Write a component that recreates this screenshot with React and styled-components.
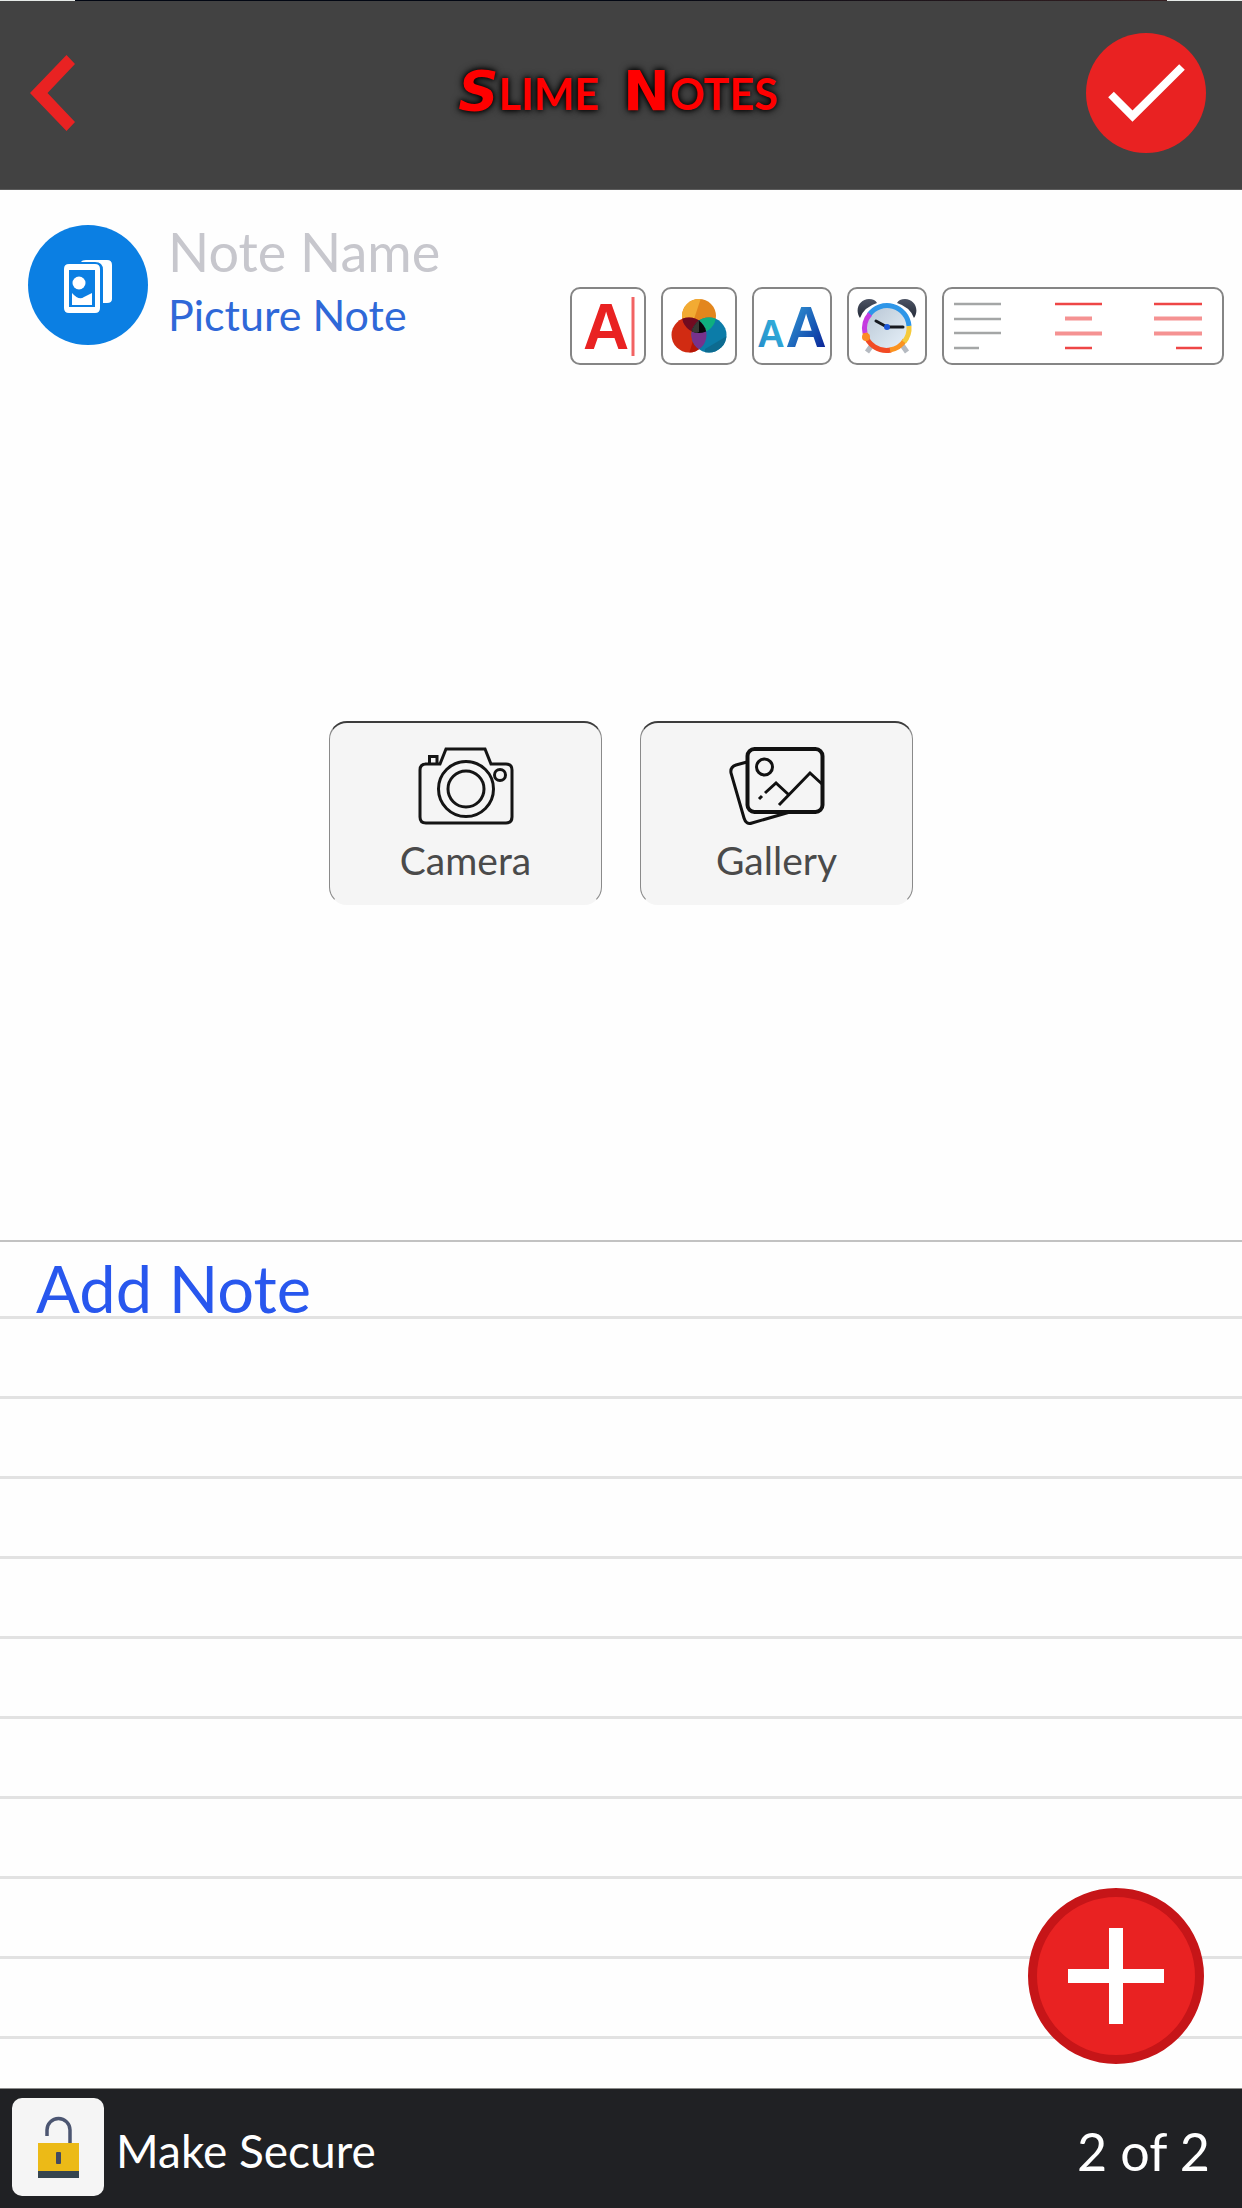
import React, { useState } from "react";
import styled, { createGlobalStyle } from "styled-components";

const GlobalStyle = createGlobalStyle`
  * {
    box-sizing: border-box;
  }
  body {
    margin: 0;
    background: #fefefe;
    font-family: Lato, "Open Sans", sans-serif;
  }
  button {
    padding: 0;
    border: none;
    background: none;
    font-family: inherit;
    cursor: pointer;
  }
  svg {
    display: block;
  }
`;

const Page = styled.div`
  display: flex;
  flex-direction: column;
  min-height: 100vh;
`;

const Header = styled.header`
  display: grid;
  grid-template-columns: 1fr auto 1fr;
  align-items: center;
  height: 190px;
  padding: 0 36px 4px 30px;
  border-bottom: 1px solid #5c5c5c;
  background: linear-gradient(
      90deg,
      #e6ebe8 0 6%,
      #020713 6% 50%,
      #351f21 94%,
      #e6ebe8 94%
    )
    top / 100% 1px no-repeat #424242;
`;

const BackButton = styled.button`
  justify-self: start;
`;

const DoneButton = styled.button`
  justify-self: end;
  width: 120px;
  height: 120px;
  border-radius: 50%;
  background: #e92222;
`;

const Logo = styled.h1`
  display: flex;
  gap: 24px;
  margin: 0;
  color: #ff0000;
  font-size: 43px;
  font-weight: 700;
  line-height: 60px;
  text-shadow: 0 0 8px #000000, 0 0 5px #000000;
`;

const LogoInitial = styled.span`
  font-family: "DejaVu Sans", sans-serif;
  font-size: 56px;
  font-style: ${(props) => (props.$slanted ? "oblique" : "normal")};
`;

const NoteHeader = styled.section`
  display: flex;
  gap: 20px;
  padding: 35px 18px 0 28px;
`;

const NoteBadge = styled.div`
  flex: none;
  width: 120px;
  height: 120px;
  border-radius: 50%;
  background: #0b7fe3;
`;

const NoteTitle = styled.div`
  display: flex;
  flex: 1;
  flex-direction: column;
  gap: 12px;
  min-width: 0;
`;

const NameInput = styled.input`
  width: 100%;
  height: 52px;
  padding: 0;
  border: none;
  outline: none;
  background: transparent;
  color: #333333;
  font-family: inherit;
  font-size: 54px;
  line-height: 52px;

  &::placeholder {
    color: #c7c7cd;
    opacity: 1;
  }
`;

const NoteType = styled.span`
  color: #2f68d8;
  font-size: 43px;
  line-height: 52px;
`;

const Toolbar = styled.div`
  display: flex;
  flex: none;
  gap: 15px;
  margin-top: 62px;
`;

const ToolButton = styled.button`
  display: flex;
  align-items: center;
  justify-content: center;
  width: ${(props) => (props.$wide ? 80 : 76)}px;
  height: 78px;
  border: 2px solid #858585;
  border-radius: 10px;
  background: #ffffff;
`;

const AlignGroup = styled.div`
  display: flex;
  align-items: center;
  justify-content: space-between;
  width: 282px;
  height: 78px;
  padding: 0 20px 0 10px;
  border: 2px solid #858585;
  border-radius: 10px;
  background: #ffffff;
`;

const Media = styled.section`
  display: flex;
  flex: 1;
  align-items: center;
  justify-content: center;
  gap: 38px;
  padding: 40px 20px 20px;
`;

const MediaButton = styled.button`
  display: flex;
  flex-direction: column;
  align-items: center;
  justify-content: center;
  gap: 12px;
  width: 273px;
  height: 184px;
  padding-top: 4px;
  border: 1px solid #8a8a8a;
  border-top: 2px solid #3c3c3c;
  border-bottom-color: #f5f5f5;
  border-radius: 18px;
  background: #f5f5f5;
  color: #4a4a4a;
  font-size: 39px;
  line-height: 46px;
`;

const Notes = styled.section`
  position: relative;
  border-top: 2px solid #c2c2c2;
`;

const NoteText = styled.textarea`
  display: block;
  width: 100%;
  padding: 6px 36px 40px;
  border: none;
  outline: none;
  resize: none;
  background: repeating-linear-gradient(
    transparent 0 74px,
    #e2e2e2 74px 77px,
    transparent 77px 80px
  );
  color: #2857ee;
  font-family: inherit;
  font-size: 65px;
  line-height: 80px;

  &::placeholder {
    color: #2857ee;
    opacity: 1;
  }
`;

const AddButton = styled.button`
  position: absolute;
  right: 38px;
  bottom: 24px;
  display: flex;
  align-items: center;
  justify-content: center;
  width: 176px;
  height: 176px;
  border: 9px solid #c61518;
  border-radius: 50%;
  background: #e92222;
`;

const Footer = styled.footer`
  display: flex;
  align-items: center;
  justify-content: space-between;
  height: 120px;
  padding: 0 32px 4px 12px;
  border-top: 1px solid #8b8b8b;
  background: #202124;
  color: #ffffff;
`;

const SecureButton = styled.button`
  display: flex;
  align-items: center;
  gap: 12px;
  color: #ffffff;
`;

const LockTile = styled.span`
  width: 92px;
  height: 98px;
  border-radius: 10px;
  background: #f5f5f5;
`;

const FooterText = styled.span`
  padding-top: 8px;
  font-size: ${(props) => (props.$large ? 52 : 46)}px;
  line-height: 60px;
`;

const BackIcon = () => (
  <svg width="46" height="76" viewBox="0 0 46 76">
    <path d="M36.500 0 45 9 17.500 38 45 67 36.500 76 0 38Z" fill="#e92222" />
  </svg>
);

const CheckIcon = () => (
  <svg width="120" height="120" viewBox="0 0 120 120">
    <path d="M25 61.500 46.500 83 96 34" fill="none" stroke="#fff" strokeWidth="8" />
  </svg>
);

const PictureNoteIcon = () => (
  <svg width="120" height="120" viewBox="0 0 120 120" fill="#fff">
    <path d="M53 37q1-2 5-2h21q5 0 5 5v34q0 4-5 4h-4V45q0-8-8-8Z" />
    <path
      fillRule="evenodd"
      d="M41 39h26q5 0 5 5v39q0 5-5 5H41q-5 0-5-5V44q0-5 5-5Zm0 6v37h26V45Z"
    />
    <circle cx="51" cy="58" r="6.500" />
    <path d="M44 68q7 8 12 4l8-4v12H44Z" />
  </svg>
);

const TextIcon = () => (
  <svg width="60" height="74" viewBox="0 0 60 74">
    <text
      x="28"
      y="60"
      textAnchor="middle"
      fontFamily="Liberation Sans, sans-serif"
      fontSize="64"
      fontWeight="700"
      fill="#e92222"
    >
      A
    </text>
    <path d="M55 8V67" stroke="#f26363" strokeWidth="3" />
  </svg>
);

const ColorsIcon = () => (
  <svg width="56" height="56" viewBox="0 0 56 56">
    <defs>
      <clipPath id="top">
        <circle cx="28" cy="18" r="17" />
      </clipPath>
      <clipPath id="left">
        <circle cx="18" cy="37" r="17.500" />
      </clipPath>
      <clipPath id="right">
        <circle cx="38" cy="37" r="17.500" />
      </clipPath>
    </defs>
    <circle cx="28" cy="18" r="17" fill="#e3861d" />
    <path d="M30 0 18 36H0V0Z" fill="#f2ab33" clipPath="url(#top)" />
    <circle cx="18" cy="37" r="17.500" fill="#d12b12" />
    <path d="M24 36 18 56H36V36Z" fill="#b51505" clipPath="url(#left)" />
    <circle cx="38" cy="37" r="17.500" fill="#0c7ca8" />
    <path d="M34 51 56 38V56H34Z" fill="#0d6b90" clipPath="url(#right)" />
    <circle cx="18" cy="37" r="17.500" fill="#710b20" clipPath="url(#top)" />
    <circle cx="38" cy="37" r="17.500" fill="#0faf7e" clipPath="url(#top)" />
    <g clipPath="url(#left)">
      <circle cx="38" cy="37" r="17.500" fill="#77328c" />
      <g clipPath="url(#right)">
        <circle cx="28" cy="18" r="17" fill="#080808" />
        <path d="M28 18V34L18 38V18Z" fill="#3a3a35" clipPath="url(#top)" />
      </g>
    </g>
  </svg>
);

const FontSizeIcon = () => (
  <svg width="70" height="74" viewBox="0 0 70 74">
    <defs>
      <linearGradient id="small" x1="0" y1="1" x2="1" y2="0">
        <stop offset="0" stopColor="#2389c8" />
        <stop offset="1" stopColor="#36b8df" />
      </linearGradient>
      <linearGradient id="big" x1="0" y1="0" x2="1" y2="1">
        <stop offset="0.200" stopColor="#2f8fd0" />
        <stop offset="0.600" stopColor="#1756b4" />
        <stop offset="1" stopColor="#08128c" />
      </linearGradient>
    </defs>
    <g fontFamily="Liberation Sans, sans-serif" fontWeight="700" textAnchor="middle">
      <text x="14" y="58" fontSize="38" fill="url(#small)">
        A
      </text>
      <text x="49" y="58" fontSize="57" fill="url(#big)">
        A
      </text>
    </g>
  </svg>
);

const AlarmIcon = () => (
  <svg width="62" height="58" viewBox="0 0 62 58">
    <defs>
      <linearGradient id="face" x1="0" y1="0" x2="1" y2="1">
        <stop offset="0" stopColor="#b8c6d4" />
        <stop offset="1" stopColor="#e8f2fa" />
      </linearGradient>
      <linearGradient id="bell" x1="0" y1="0" x2="0" y2="1">
        <stop offset="0" stopColor="#4d5464" />
        <stop offset="1" stopColor="#252b39" />
      </linearGradient>
    </defs>
    <path d="m16 48-5 7M46 48l5 7" stroke="#b5bac1" strokeWidth="5" />
    <path d="M4 21C-2 12 4 2 13 2q6 0 8 4Q8 10 4 21Z" fill="url(#bell)" />
    <path d="M58 21C64 12 58 2 49 2q-6 0-8 4 13 4 17 15Z" fill="url(#bell)" />
    <circle cx="31" cy="31" r="21" fill="url(#face)" />
    <g fill="none" strokeWidth="5">
      <path d="M13 18A22 22 0 0 1 53 29" stroke="#2e96e8" />
      <path d="M9 36A22 22 0 0 1 14 17" stroke="#c53be0" />
      <path d="M35 53A22 22 0 0 1 9 36" stroke="#f24a24" />
      <path d="M49 43A22 22 0 0 1 34 53" stroke="#fb9320" />
      <path d="M53 29A22 22 0 0 1 48 45" stroke="#f5ca3b" />
    </g>
    <circle cx="10" cy="40" r="4" fill="#fb8b24" />
    <path d="m20 24 11 6h16" fill="none" stroke="#16191f" strokeWidth="3" strokeLinecap="round" />
    <circle cx="31" cy="30" r="3" fill="#1c57d8" />
  </svg>
);

const LeftIcon = () => (
  <svg width="48" height="50" viewBox="0 0 48 50">
    <path
      d="M0 3H47M0 18H47M0 32H47M0 47H25"
      stroke="#a4a6a6"
      strokeWidth="2.500"
    />
  </svg>
);

const CenterIcon = () => (
  <svg width="48" height="50" viewBox="0 0 48 50" fill="none">
    <path d="M1 3H48M11 47H38" stroke="#ee4646" strokeWidth="2.500" />
    <path d="M11 17.500H38M1 32.500H48" stroke="#f59292" strokeWidth="4" />
  </svg>
);

const RightIcon = () => (
  <svg width="48" height="50" viewBox="0 0 48 50" fill="none">
    <path d="M0 3H48M22 47H48" stroke="#ee4646" strokeWidth="2.500" />
    <path d="M0 17.500H48M0 32.500H48" stroke="#f59292" strokeWidth="4" />
  </svg>
);

const CameraIcon = () => (
  <svg width="96" height="78" viewBox="0 0 96 78" fill="none" stroke="#151515" strokeWidth="3">
    <path d="M7 17H22L28 2H67L73 17H88Q94 17 94 23V70Q94 76 88 76H8Q2 76 2 70V23Q2 17 8 17Z" />
    <path d="M11.500 16V9.500H19V16" />
    <circle cx="48" cy="42" r="27.500" />
    <circle cx="48" cy="42" r="18" />
    <circle cx="82" cy="28" r="5.500" />
  </svg>
);

const GalleryIcon = () => (
  <svg width="96" height="78" viewBox="0 0 96 78" fill="none" stroke="#111111" strokeWidth="3">
    <rect x="18.500" y="2" width="75" height="63" rx="7" strokeWidth="4" />
    <path d="M18 15 7 18Q1 20 2 26L15 71Q17 78 23 76L61 65" />
    <circle cx="35.500" cy="20" r="8" />
    <path d="m30 52 3-3M36 46 47 36 60 48M50 58 81 26 93 37" />
  </svg>
);

const PlusIcon = () => (
  <svg width="96" height="96" viewBox="0 0 96 96">
    <path d="M0 48H96M48 0V96" stroke="#fff" strokeWidth="14" />
  </svg>
);

const LockIcon = () => (
  <svg width="92" height="98" viewBox="0 0 92 98" fill="none">
    <path d="M35 38V32a11.500 11.500 0 0 1 23 0V46" stroke="#4c5671" strokeWidth="3.500" />
    <path d="M26 45H67V73H26Z" fill="#ecba17" />
    <path d="M26 73H67V80H26Z" fill="#36454f" />
    <rect x="44" y="54" width="5" height="12" rx="1" fill="#434a60" />
  </svg>
);

function App() {
  const [name, setName] = useState("");
  const [note, setNote] = useState("");
  const [align, setAlign] = useState("left");

  return (
    <Page>
      <GlobalStyle />
      <Header>
        <BackButton aria-label="Back">
          <BackIcon />
        </BackButton>
        <Logo>
          <span>
            <LogoInitial $slanted>S</LogoInitial>LIME
          </span>
          <span>
            <LogoInitial>N</LogoInitial>OTES
          </span>
        </Logo>
        <DoneButton aria-label="Done">
          <CheckIcon />
        </DoneButton>
      </Header>

      <NoteHeader>
        <NoteBadge>
          <PictureNoteIcon />
        </NoteBadge>
        <NoteTitle>
          <NameInput
            aria-label="Note Name"
            placeholder="Note Name"
            value={name}
            onChange={(e) => setName(e.target.value)}
          />
          <NoteType>Picture Note</NoteType>
        </NoteTitle>
        <Toolbar>
          <ToolButton aria-label="Font">
            <TextIcon />
          </ToolButton>
          <ToolButton aria-label="Color">
            <ColorsIcon />
          </ToolButton>
          <ToolButton $wide aria-label="Text size">
            <FontSizeIcon />
          </ToolButton>
          <ToolButton $wide aria-label="Reminder">
            <AlarmIcon />
          </ToolButton>
          <AlignGroup role="group" aria-label="Alignment">
            <button aria-label="Align left" onClick={() => setAlign("left")}>
              <LeftIcon />
            </button>
            <button aria-label="Align center" onClick={() => setAlign("center")}>
              <CenterIcon />
            </button>
            <button aria-label="Align right" onClick={() => setAlign("right")}>
              <RightIcon />
            </button>
          </AlignGroup>
        </Toolbar>
      </NoteHeader>

      <Media>
        <MediaButton>
          <CameraIcon />
          Camera
        </MediaButton>
        <MediaButton>
          <GalleryIcon />
          Gallery
        </MediaButton>
      </Media>

      <Notes>
        <NoteText
          aria-label="Add Note"
          placeholder="Add Note"
          rows={10}
          value={note}
          style={{ textAlign: align }}
          onChange={(e) => setNote(e.target.value)}
        />
        <AddButton aria-label="Add">
          <PlusIcon />
        </AddButton>
      </Notes>

      <Footer>
        <SecureButton>
          <LockTile>
            <LockIcon />
          </LockTile>
          <FooterText>Make Secure</FooterText>
        </SecureButton>
        <FooterText $large>2 of 2</FooterText>
      </Footer>
    </Page>
  );
}

export default App;
